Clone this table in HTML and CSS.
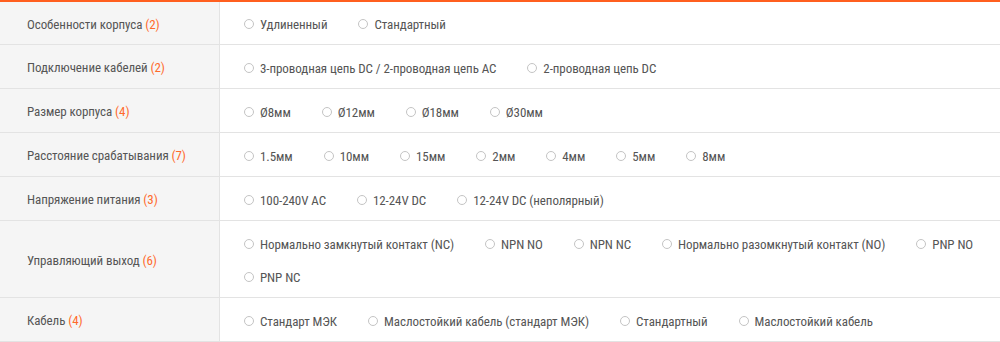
FILE: index.html
```html
<!DOCTYPE html>
<html lang="ru">
<head>
<meta charset="utf-8">
<link rel="stylesheet" href="styles.css">
</head>
<body>
<div class="filters">
  <div class="row">
    <div class="label">Особенности корпуса <span class="count">(2)</span></div>
    <div class="opts">
      <label class="opt"><span class="radio"></span>Удлиненный</label>
      <label class="opt"><span class="radio"></span>Стандартный</label>
    </div>
  </div>
  <div class="row">
    <div class="label">Подключение кабелей <span class="count">(2)</span></div>
    <div class="opts">
      <label class="opt"><span class="radio"></span>3-проводная цепь DC / 2-проводная цепь AC</label>
      <label class="opt"><span class="radio"></span>2-проводная цепь DC</label>
    </div>
  </div>
  <div class="row">
    <div class="label">Размер корпуса <span class="count">(4)</span></div>
    <div class="opts">
      <label class="opt"><span class="radio"></span>Ø8мм</label>
      <label class="opt"><span class="radio"></span>Ø12мм</label>
      <label class="opt"><span class="radio"></span>Ø18мм</label>
      <label class="opt"><span class="radio"></span>Ø30мм</label>
    </div>
  </div>
  <div class="row">
    <div class="label">Расстояние срабатывания <span class="count">(7)</span></div>
    <div class="opts">
      <label class="opt"><span class="radio"></span>1.5мм</label>
      <label class="opt"><span class="radio"></span>10мм</label>
      <label class="opt"><span class="radio"></span>15мм</label>
      <label class="opt"><span class="radio"></span>2мм</label>
      <label class="opt"><span class="radio"></span>4мм</label>
      <label class="opt"><span class="radio"></span>5мм</label>
      <label class="opt"><span class="radio"></span>8мм</label>
    </div>
  </div>
  <div class="row">
    <div class="label">Напряжение питания <span class="count">(3)</span></div>
    <div class="opts">
      <label class="opt"><span class="radio"></span>100-240V AC</label>
      <label class="opt"><span class="radio"></span>12-24V DC</label>
      <label class="opt"><span class="radio"></span>12-24V DC (неполярный)</label>
    </div>
  </div>
  <div class="row">
    <div class="label">Управляющий выход <span class="count">(6)</span></div>
    <div class="opts">
      <label class="opt"><span class="radio"></span>Нормально замкнутый контакт (NC)</label>
      <label class="opt"><span class="radio"></span>NPN NO</label>
      <label class="opt"><span class="radio"></span>NPN NC</label>
      <label class="opt"><span class="radio"></span>Нормально разомкнутый контакт (NO)</label>
      <label class="opt"><span class="radio"></span>PNP NO</label>
      <label class="opt"><span class="radio"></span>PNP NC</label>
    </div>
  </div>
  <div class="row">
    <div class="label">Кабель <span class="count">(4)</span></div>
    <div class="opts">
      <label class="opt"><span class="radio"></span>Стандарт МЭК</label>
      <label class="opt"><span class="radio"></span>Маслостойкий кабель (стандарт МЭК)</label>
      <label class="opt"><span class="radio"></span>Стандартный</label>
      <label class="opt"><span class="radio"></span>Маслостойкий кабель</label>
    </div>
  </div>
</div>
</body>
</html>
```
FILE: styles.css
```css
* { box-sizing: border-box; }
html, body { margin: 0; padding: 0; background: #fff; }
body {
  font-family: "Roboto", "Liberation Sans", sans-serif;
  font-stretch: condensed;
  font-weight: 440;
  font-size: 13px;
  letter-spacing: -0.08px;
  color: #555;
}
.filters {
  border-top: 2px solid #ff5f1f;
  width: 1000px;
}
.row {
  display: flex;
  border-bottom: 1px solid #e3e3e3;
}
.label {
  width: 220px;
  flex: none;
  background: #f5f5f5;
  border-right: 1px solid #e3e3e3;
  padding: 2px 0 0 27px;
  display: flex;
  align-items: center;
  white-space: pre;
}
.count { color: #ff6a2b; }
.opts {
  flex: 1;
  display: flex;
  flex-wrap: wrap;
  align-items: center;
  column-gap: 31px;
  row-gap: 13px;
  padding: 13px 24px 10px;
  min-height: 43px;
}
.row:first-child .opts { min-height: 42px; padding-top: 12px; }
.opt {
  display: flex;
  align-items: center;
  height: 20px;
  white-space: nowrap;
}
.radio {
  width: 10px;
  height: 10px;
  border: 1px solid #c4c4c4;
  border-radius: 50%;
  margin-right: 6px;
  flex: none;
}
```
